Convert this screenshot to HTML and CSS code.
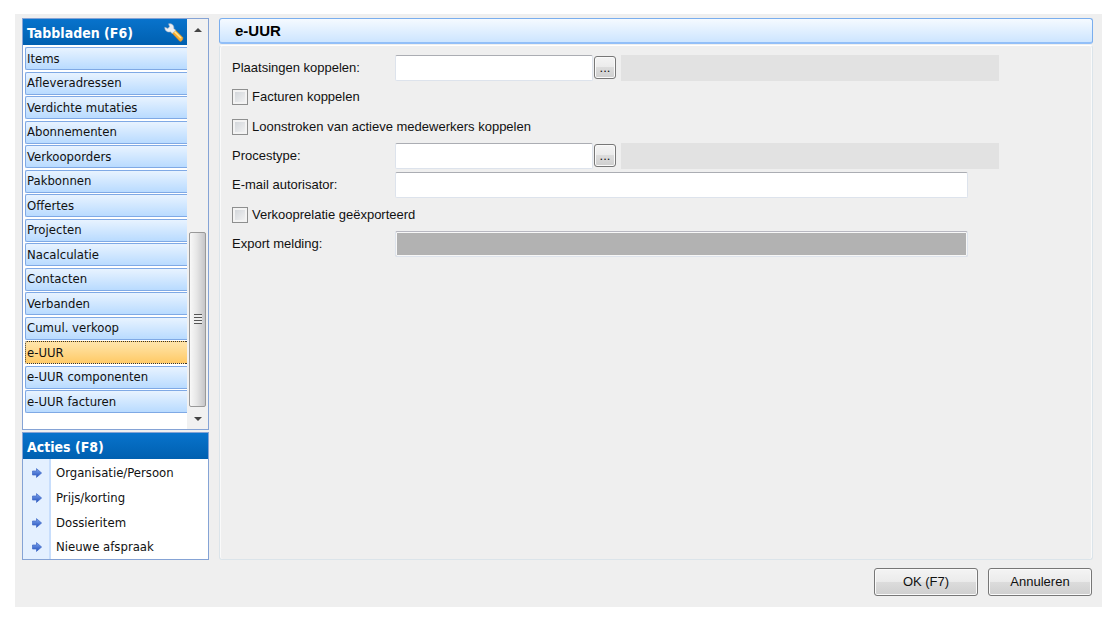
FILE: index.html
```html
<!DOCTYPE html>
<html lang="nl">
<head>
<meta charset="utf-8">
<title>e-UUR</title>
<link rel="stylesheet" href="styles.css">
</head>
<body>
<svg class="defs" aria-hidden="true">
  <defs>
    <linearGradient id="arrow-fill" x1="0" y1="0" x2="0" y2="1">
      <stop offset="0" stop-color="#7fa6ee"/><stop offset="1" stop-color="#2450bd"/>
    </linearGradient>
    <linearGradient id="handle-fill" x1="0" y1="1" x2="1" y2="0">
      <stop offset="0" stop-color="#f08a10"/><stop offset="1" stop-color="#ffd75c"/>
    </linearGradient>
    <symbol id="arrow" viewBox="0 0 10 10">
      <path d="M0.5 3H4.5V0.6L9.6 5L4.5 9.4V7H0.5Z" fill="url(#arrow-fill)" stroke="#3f68c6" stroke-width=".7"/>
    </symbol>
  </defs>
</svg>
<div class="window">
  <div class="content">
    <aside class="sidebar">
      <nav class="panel tabs" aria-label="Tabbladen">
        <div class="tabs-main">
          <h2 class="panel-title">Tabbladen (F6)
            <svg class="wrench" viewBox="0 0 20 20" aria-hidden="true">
              <path d="M7.6 9.6L10.8 6.6L18.6 14.2Q19.6 17.6 16 18.4Z" fill="url(#handle-fill)" stroke="#e08c1c" stroke-width=".6"/>
              <path d="M10.4 8.4L17 15" stroke="#ffe596" stroke-width="1.4"/>
              <path d="M4.6 .8L5.6 3.8L3.8 5.4L.8 4.2C.6 7.6 3.4 9.6 6.4 8.8L8.2 10.6L11.6 7.2L9.8 5.4C10.2 2.4 7.8 .2 4.6 .8Z" fill="#eceff3" stroke="#a9b4c4" stroke-width=".6"/>
            </svg>
          </h2>
          <div class="tab-list">
            <button class="tab">Items</button>
            <button class="tab">Afleveradressen</button>
            <button class="tab">Verdichte mutaties</button>
            <button class="tab">Abonnementen</button>
            <button class="tab">Verkooporders</button>
            <button class="tab">Pakbonnen</button>
            <button class="tab">Offertes</button>
            <button class="tab">Projecten</button>
            <button class="tab">Nacalculatie</button>
            <button class="tab">Contacten</button>
            <button class="tab">Verbanden</button>
            <button class="tab">Cumul. verkoop</button>
            <button class="tab selected" aria-current="page">e-UUR</button>
            <button class="tab">e-UUR componenten</button>
            <button class="tab">e-UUR facturen</button>
          </div>
        </div>
        <div class="scrollbar" aria-hidden="true">
          <svg class="scroll-arrow" viewBox="0 0 8 4"><path d="M0 4L4 0L8 4Z" fill="#444"/></svg>
          <div class="track"><div class="thumb"><span class="grip"></span></div></div>
          <svg class="scroll-arrow" viewBox="0 0 8 4"><path d="M0 0L4 4L8 0Z" fill="#444"/></svg>
        </div>
      </nav>
      <section class="panel actions">
        <h2 class="panel-title">Acties (F8)</h2>
        <div class="action-list">
          <button class="action"><svg class="arrow" aria-hidden="true"><use href="#arrow"/></svg>Organisatie/Persoon</button>
          <button class="action"><svg class="arrow" aria-hidden="true"><use href="#arrow"/></svg>Prijs/korting</button>
          <button class="action"><svg class="arrow" aria-hidden="true"><use href="#arrow"/></svg>Dossieritem</button>
          <button class="action"><svg class="arrow" aria-hidden="true"><use href="#arrow"/></svg>Nieuwe afspraak</button>
        </div>
      </section>
    </aside>
    <main class="main">
      <h1 class="main-title">e-UUR</h1>
      <form class="form">
        <div class="fields">
          <div class="row">
            <label class="label" for="plaatsingen">Plaatsingen koppelen:</label>
            <input class="text code" id="plaatsingen" type="text">
            <button class="browse" type="button" aria-label="Plaatsing zoeken">...</button>
            <output class="description"></output>
          </div>
          <div class="row"><input class="check" id="facturen" type="checkbox"><label for="facturen">Facturen koppelen</label></div>
          <div class="row"><input class="check" id="loonstroken" type="checkbox"><label for="loonstroken">Loonstroken van actieve medewerkers koppelen</label></div>
          <div class="row">
            <label class="label" for="procestype">Procestype:</label>
            <input class="text code" id="procestype" type="text">
            <button class="browse" type="button" aria-label="Procestype zoeken">...</button>
            <output class="description"></output>
          </div>
          <div class="row">
            <label class="label" for="email">E-mail autorisator:</label>
            <input class="text wide" id="email" type="text">
          </div>
          <div class="row"><input class="check" id="relatie" type="checkbox"><label for="relatie">Verkooprelatie geëxporteerd</label></div>
          <div class="row">
            <label class="label" for="melding">Export melding:</label>
            <input class="text wide locked" id="melding" type="text" readonly>
          </div>
        </div>
      </form>
    </main>
  </div>
  <footer class="footer">
    <button class="command">OK (F7)</button>
    <button class="command">Annuleren</button>
  </footer>
</div>
</body>
</html>
```

FILE: styles.css
```css
* { box-sizing: border-box; }

body {
  margin: 0;
  padding: 14px 15px;
  min-height: 100vh;
  display: flex;
  background: #fff;
  color: #111;
  font: 13px/16px "Liberation Sans", Arial, sans-serif;
}

h1, h2 { margin: 0; }
button, input { font: inherit; color: inherit; }
.defs { position: absolute; width: 0; height: 0; }

.window {
  flex: 1;
  display: flex;
  flex-direction: column;
  padding: 4px 9px 11px 7px;
  background: #efefef;
}

.content { flex: 1; display: flex; gap: 10px; }

.sidebar {
  width: 187px;
  display: flex;
  flex-direction: column;
  gap: 2px;
  font: 13px/16px "DejaVu Sans Condensed", "DejaVu Sans", Tahoma, sans-serif;
}

.panel { border: 1px solid #85a3d5; background: #fff; }

.panel-title {
  display: flex;
  align-items: center;
  justify-content: space-between;
  height: 26px;
  padding: 2px 3px 0 4px;
  background: linear-gradient(#0873cc, #0060b0);
  color: #fff;
  font: bold 14px/16px "DejaVu Sans Condensed", "DejaVu Sans", Tahoma, sans-serif;
}

.wrench { width: 20px; height: 20px; }

.tabs { flex: 1; display: flex; }
.tabs-main { flex: 1; display: flex; flex-direction: column; }

.tab-list {
  flex: 1;
  display: grid;
  align-content: space-between;
  padding: 2px 0 16px 2px;
}

.tab {
  height: 23px;
  padding: 0 0 0 1px;
  border: 1px solid #7fa9e5;
  border-right: 0;
  border-radius: 2px 0 0 2px;
  background: linear-gradient(#e8f3ff, #b9dbff);
  text-align: left;
}

.tab.selected {
  border: 1px dotted #333;
  border-right: 0;
  background: linear-gradient(#ffe5ac, #ffca66);
}

.scrollbar {
  width: 21px;
  display: flex;
  flex-direction: column;
  align-items: center;
  padding: 9px 1px 8px;
  background: #f1f1f1;
}

.scroll-arrow { width: 8px; height: 4px; }

.track { flex: 1; align-self: stretch; display: flex; align-items: flex-end; padding: 10px 1px; }

.thumb {
  width: 100%;
  height: 48%;
  display: grid;
  place-items: center;
  border: 1px solid #999;
  border-radius: 2px;
  background: linear-gradient(90deg, #f8f8f8, #e6e6e6 45%, #c5c5c8);
}

.grip { width: 8px; height: 10px; background: repeating-linear-gradient(#555 0 1px, #eee 1px 3px); }

.action-list {
  display: grid;
  padding: 1px 0 0;
  background: linear-gradient(90deg, #e4f0ff 0 26px, #c8defc 26px 28px, #fff 28px);
}

.action {
  height: 25px;
  display: flex;
  align-items: center;
  gap: 14px;
  padding: 0 0 0 9px;
  border: 0;
  background: none;
}

.action-list .action:last-child { height: 24px; }
.arrow { width: 10px; height: 10px; }

.main { flex: 1; display: flex; flex-direction: column; }

.main-title {
  height: 26px;
  padding: 4px 15px;
  border: 1px solid #7aaeee;
  border-bottom: 2px solid #92bff8;
  border-radius: 3px;
  background: linear-gradient(#f5faff, #cde5ff);
  color: #000;
  font: bold 15px/16px "Liberation Sans", Arial, sans-serif;
}

.form {
  flex: 1;
  margin-top: 1px;
  padding: 7px 12px;
  border: 1px solid #dbe4ea;
  border-top-color: #fff;
  border-radius: 3px;
  box-shadow: inset 1px 0 #fafafa, inset -1px 0 #fafafa;
}

.fields {
  min-height: 206px;
  display: grid;
  grid-auto-rows: 1fr;
}

.row { display: flex; align-items: center; }
.label { width: 163px; }

.text {
  height: 26px;
  padding: 2px 4px;
  border: 1px solid #dde3ec;
  border-top: 1px solid #abadb3;
  border-radius: 2px;
  background: #fff;
}

.code { width: 198px; }
.wide { width: 573px; }
.locked { background: #b2b2b2; box-shadow: inset 0 0 0 1px #f7f7f7; border-top-color: #b7b7c0; }

.browse, .command {
  border: 1px solid #777;
  border-radius: 3px;
  background: linear-gradient(#f4f4f4, #ebebeb 48%, #dcdcdc 50%, #cfcfcf);
  box-shadow: inset 0 0 0 1px #fafafa;
}

.browse { width: 22px; height: 23px; margin: 0 5px 0 1px; padding: 0; }
.description { width: 378px; height: 26px; background: #e2e2e2; }

.check {
  appearance: none;
  width: 16px;
  height: 16px;
  margin: 0 4px 0 0;
  border: 1px solid #8e8f8f;
  background: linear-gradient(135deg, #cdd1d6, #f6f6f6);
  box-shadow: inset 0 0 0 2px #f3f3f3;
}

.footer { display: flex; justify-content: flex-end; gap: 10px; padding: 8px 1px 0 0; }
.command { width: 104px; height: 28px; padding: 0; }
```
